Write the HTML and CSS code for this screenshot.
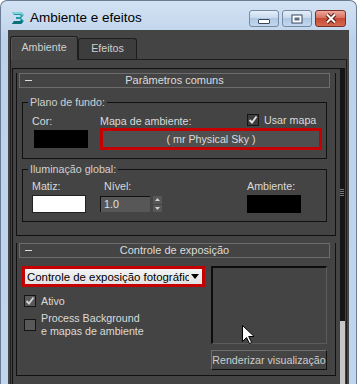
FILE: index.html
```html
<!DOCTYPE html>
<html lang="pt">
<head>
    <meta charset="UTF-8">
    <title>Ambiente e efeitos</title>
    <link rel="stylesheet" href="styles.css">
</head>
<body>
    <div class="window">
        <div class="titlebar">
            <svg class="app-icon" width="16" height="16" viewBox="0 0 16 16">
                <path d="M2 2h9l3 3-3 3 3 3-3 3H2l2-3h6l1-1-1-1H6V7h4l1-1-1-1H4z" fill="#1b9aa3"/>
                <path d="M2 2h9l3 3-1 1-2-2H4z" fill="#7fd6da"/>
                <path d="M2 14l2-3h6l1-1 2 2-2 2z" fill="#0d6f78"/>
            </svg>
            <span class="title">Ambiente e efeitos</span>
            <div class="caption-btns">
                <span class="cbtn"><i class="glyph-min"></i></span>
                <span class="cbtn">
                    <svg width="12" height="10" viewBox="0 0 12 10"><rect x="0.5" y="0.5" width="11" height="9" fill="#34475e"/><rect x="1.5" y="1.5" width="9" height="7" fill="#fff"/><rect x="3.5" y="3.5" width="5" height="3" fill="#5b6e85"/></svg>
                </span>
                <span class="cbtn close">
                    <svg width="14" height="11" viewBox="0 0 14 11"><path d="M3 1.5l8 8M11 1.5l-8 8" stroke="#5a1a14" stroke-width="4"/><path d="M3 1.5l8 8M11 1.5l-8 8" stroke="#fff" stroke-width="2"/></svg>
                </span>
            </div>
        </div>
        <div class="client">
            <div class="tabs">
                <div class="tab active">Ambiente</div>
                <div class="tab">Efeitos</div>
            </div>
            <div class="tab-page">
                <div class="scroller">
                    <div class="rollouts">
                        <div class="rollout">
                            <div class="roll-head"><span class="minus"></span><span>Parâmetros comuns</span><span></span></div>
                            <div class="roll-body">
                                <fieldset class="group bg-group">
                                    <legend>Plano de fundo:</legend>
                                    <div class="lbl">Cor:</div>
                                    <div class="lbl map-lbl">Mapa de ambiente:</div>
                                    <div class="usar"><span class="check on"><svg width="10" height="10" viewBox="0 0 10 10"><path d="M1.5 5l2.5 2.5 4.5-6" fill="none" stroke="#e0e0e0" stroke-width="2"/></svg></span>Usar mapa</div>
                                    <div class="swatch black cor-swatch"></div>
                                    <div class="map-btn">( mr Physical Sky )</div>
                                </fieldset>
                                <fieldset class="group gi-group">
                                    <legend>Iluminação global:</legend>
                                    <div class="lbl">Matiz:</div>
                                    <div class="lbl nivel-lbl">Nível:</div>
                                    <div class="lbl">Ambiente:</div>
                                    <div class="swatch white"></div>
                                    <div class="spinner">
                                        <div class="spin-input">1.0</div>
                                        <div class="spin-arrows">
                                            <span><svg width="5" height="3" viewBox="0 0 5 3"><path d="M0 3L2.5 0 5 3z" fill="#d0d0d0"/></svg></span>
                                            <span><svg width="5" height="3" viewBox="0 0 5 3"><path d="M0 0h5L2.5 3z" fill="#d0d0d0"/></svg></span>
                                        </div>
                                    </div>
                                    <div class="swatch black"></div>
                                </fieldset>
                            </div>
                        </div>
                        <div class="rollout second">
                            <div class="roll-head"><span class="minus"></span><span>Controle de exposição</span><span></span></div>
                            <div class="roll-body exposure">
                                <div class="exp-left">
                                    <div class="dropdown">
                                        <span class="dd-text">Controle de exposição fotográfica</span>
                                        <svg width="8" height="5" viewBox="0 0 8 5"><path d="M0 0h8L4 5z" fill="#000"/></svg>
                                    </div>
                                    <div class="check-row ativo"><span class="check on"><svg width="10" height="10" viewBox="0 0 10 10"><path d="M1.5 5l2.5 2.5 4.5-6" fill="none" stroke="#cfcfcf" stroke-width="2"/></svg></span>Ativo</div>
                                    <div class="check-row process"><span class="check"></span><span>Process Background<br>e mapas de ambiente</span></div>
                                </div>
                                <div class="exp-right">
                                    <div class="preview">
                                        <svg class="cursor" width="12" height="19" viewBox="0 0 12 19"><path d="M0.5 0.5v16l4-4 3 6 2.2-1-3-6h5.5z" fill="#fff" stroke="#000"/></svg>
                                    </div>
                                    <div class="render-btn">Renderizar visualização</div>
                                </div>
                            </div>
                        </div>
                    </div>
                    <div class="scrollbar">
                        <div class="grip"></div>
                        <div class="thumb"></div>
                    </div>
                </div>
            </div>
        </div>
    </div>
</body>
</html>
```

FILE: styles.css
```css
body {
    margin: 0;
    background: #fff;
    font-family: "Liberation Sans", Arial, sans-serif;
    font-size: 10.7px;
    color: #dadada;
}
.window {
    width: 357px;
    height: 384px;
    box-sizing: border-box;
    border: 1px solid #6a7d94;
    border-bottom: none;
    border-radius: 7px 7px 0 0;
    background: linear-gradient(#d3e2f3, #bcd2eb 40px, #c1d6ee);
    padding: 0 7px;
    overflow: hidden;
    display: flex;
    flex-direction: column;
}
.titlebar {
    height: 29px;
    flex-shrink: 0;
    box-sizing: border-box;
    padding: 9px 3px 0 2px;
    display: flex;
    align-items: flex-start;
}
.app-icon {
    margin-right: 4px;
}
.title {
    font-size: 13.5px;
    line-height: 16px;
    color: #000;
}
.caption-btns {
    margin-left: auto;
    display: flex;
    gap: 3px;
}
.cbtn {
    width: 30px;
    height: 17px;
    box-sizing: border-box;
    border: 1px solid #7489a3;
    border-radius: 3px;
    background: linear-gradient(#e4eef9, #c9daee 45%, #b0c8e4 50%, #c3d7ee);
    display: flex;
    align-items: center;
    justify-content: center;
}
.cbtn.close {
    width: 31px;
    border-color: #7b2f2a;
    background: linear-gradient(#eba89c, #d7705f 45%, #c64a36 50%, #d36a50);
}
.glyph-min {
    width: 10px;
    height: 3px;
    margin-top: 5px;
    background: #fff;
    border: 1px solid #34475e;
    border-radius: 1px;
}
.client {
    flex: 1;
    background: #444;
    padding: 6px 2px 0;
    display: flex;
    flex-direction: column;
    min-height: 0;
}
.tabs {
    display: flex;
    align-items: flex-end;
    height: 24px;
    margin-bottom: -1px;
    position: relative;
    z-index: 1;
}
.tab {
    box-sizing: border-box;
    height: 21px;
    width: 59px;
    margin-bottom: 1px;
    border: 1px solid #1d1d1d;
    border-bottom: none;
    border-radius: 3px 3px 0 0;
    background: #3d3d3d;
    text-align: center;
    line-height: 18px;
    color: #cfcfcf;
}
.tab.active {
    height: 24px;
    width: 68px;
    margin-bottom: 0;
    background: #474747;
    line-height: 20px;
    box-shadow: inset 1px 1px 0 #555;
}
.tab-page {
    flex: 1;
    min-height: 0;
    border: 1px solid #1d1d1d;
    border-bottom: none;
    padding: 8px 1px 0;
    display: flex;
}
.scroller {
    flex: 1;
    display: flex;
    border-top: 1px solid #111;
    border-left: 1px solid #111;
}
.rollouts {
    width: 327px;
    box-sizing: border-box;
    padding: 0 4px 0 3px;
}
.scrollbar {
    width: 5px;
    background: #151515;
    display: flex;
    flex-direction: column;
}
.grip {
    height: 8px;
    margin: 120px 1px 0 0;
    background: repeating-linear-gradient(#7a7a7a 0 1px, transparent 1px 2px);
}
.thumb {
    margin-top: 124px;
    flex: 1;
    background: #c6c6c6;
}
.rollout {
    border: 1px solid #111;
    border-top: none;
    margin-top: 12px;
}
.rollout.second {
    margin-top: 15px;
}
.roll-head {
    height: 15px;
    box-sizing: border-box;
    margin: -8px 5px 0 2px;
    border: 1px solid #6c6c6c;
    background: #444;
    display: grid;
    grid-template-columns: 1fr auto 1fr;
    align-items: center;
    line-height: 13px;
    font-size: 11px;
    color: #dcdcdc;
}
.minus {
    width: 7px;
    height: 1px;
    margin-left: 5px;
    background: #dcdcdc;
}
.roll-body {
    padding: 7px 8px 13px 5px;
}
.group {
    margin: 0;
    min-width: 0;
    border: 1px solid #111;
    padding: 5px 4px 8px 9px;
    display: grid;
    grid-template-columns: 68px 147px 1fr;
}
.group legend {
    padding: 0 2px;
    margin-left: -4px;
    line-height: 14px;
    color: #d0d0d0;
}
.gi-group {
    margin-top: 3px;
    padding-top: 3px;
}
.lbl {
    line-height: 14px;
    white-space: nowrap;
}
.map-lbl {
    grid-column: 2;
}
.nivel-lbl {
    padding-left: 4px;
}
.usar {
    display: flex;
    align-items: center;
    gap: 5px;
    height: 12px;
    white-space: nowrap;
}
.check {
    width: 12px;
    height: 12px;
    box-sizing: border-box;
    border: 1px solid #151515;
    background: #585858;
    display: flex;
    align-items: center;
    justify-content: center;
    flex-shrink: 0;
}
.usar .check {
    background: #3c3c3c;
}
.swatch {
    width: 54px;
    height: 18px;
    margin-top: 2px;
}
.swatch.black {
    background: #000;
}
.swatch.white {
    background: #fff;
    box-sizing: border-box;
    border: 1px solid #222;
}
.cor-swatch {
    margin-left: 2px;
}
.map-btn {
    grid-column: 2 / 4;
    height: 22px;
    box-sizing: border-box;
    border: 3px solid #c50000;
    background: #4f4f4f;
    text-align: center;
    line-height: 16px;
    color: #dcdcdc;
}
.spinner {
    display: flex;
    gap: 3px;
    margin-top: 3px;
    height: 16px;
}
.spin-input {
    width: 50px;
    box-sizing: border-box;
    border-top: 1px solid #111;
    border-left: 1px solid #111;
    background: #575757;
    padding-left: 3px;
    line-height: 15px;
    color: #e0e0e0;
}
.spin-arrows {
    width: 9px;
    display: flex;
    flex-direction: column;
    gap: 1px;
}
.spin-arrows span {
    flex: 1;
    background: #575757;
    display: flex;
    align-items: center;
    justify-content: center;
}
.exposure {
    display: grid;
    grid-template-columns: 183px 116px;
    gap: 6px;
    padding: 8px 8px 5px 5px;
}
.dropdown {
    height: 21px;
    box-sizing: border-box;
    border: 3px solid #c50000;
    background: linear-gradient(#f4f4f4, #e2e2e2);
    display: flex;
    align-items: center;
    color: #000;
    font-size: 11.4px;
}
.dd-text {
    flex: 1;
    overflow: hidden;
    white-space: nowrap;
    padding-left: 2px;
}
.dropdown svg {
    margin: 0 3px 0 2px;
}
.check-row {
    display: flex;
    align-items: center;
    gap: 5px;
    margin-left: 2px;
    line-height: 14px;
}
.ativo {
    margin-top: 7px;
}
.process {
    margin-top: 4px;
    line-height: 13px;
}
.preview {
    height: 78px;
    box-sizing: border-box;
    border-top: 2px solid #0d0d0d;
    border-left: 2px solid #0d0d0d;
    border-right: 1px solid #5c5c5c;
    border-bottom: 1px solid #5c5c5c;
    position: relative;
}
.cursor {
    position: absolute;
    left: 29px;
    top: 57px;
}
.render-btn {
    margin-top: 6px;
    height: 20px;
    box-sizing: border-box;
    border: 1px solid #111;
    border-top-color: #6e6e6e;
    border-left-color: #6e6e6e;
    text-align: center;
    line-height: 18px;
    white-space: nowrap;
    color: #cdcdcd;
}
```
